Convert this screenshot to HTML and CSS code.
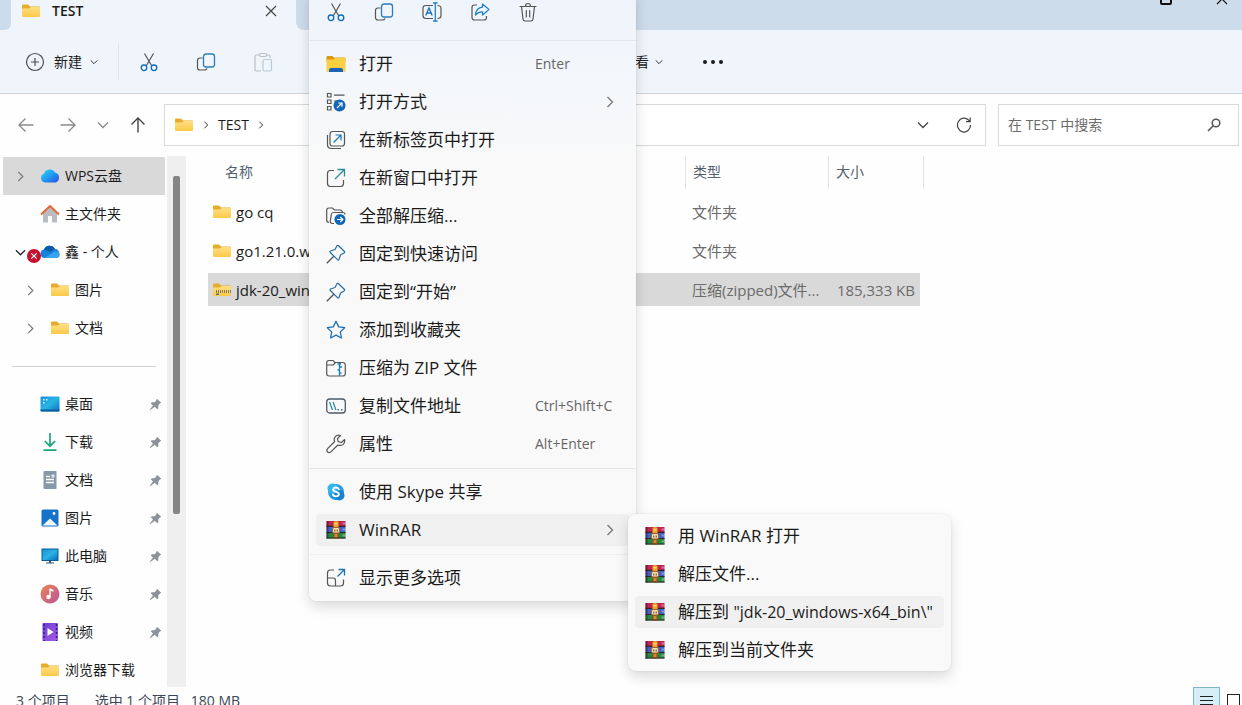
FILE: index.html
```html
<!DOCTYPE html>
<html lang="zh-CN">
<head>
    <meta charset="UTF-8">
    <meta name="viewport" content="width=device-width, initial-scale=1.0">
    <title>TEST</title>
    <link rel="stylesheet" href="styles.css">
</head>
<body>

    <!-- Shared icons -->
    <svg class="sprite" aria-hidden="true">
        <defs>
            <linearGradient id="g-folder" x1="0" y1="0" x2="0" y2="1"><stop offset="0" stop-color="#ffdf83"/><stop offset="1" stop-color="#fbc94a"/></linearGradient>
            <linearGradient id="g-wps" x1="0" y1="0" x2="1" y2="1"><stop offset="0" stop-color="#2fd6e8"/><stop offset=".5" stop-color="#1f9cf5"/><stop offset="1" stop-color="#2a4de0"/></linearGradient>
            <linearGradient id="g-desk" x1="0" y1="0" x2="1" y2="1"><stop offset="0" stop-color="#1b8fd6"/><stop offset=".5" stop-color="#28b4e4"/><stop offset="1" stop-color="#0d6ebd"/></linearGradient>
            <linearGradient id="g-music" x1="0" y1="0" x2="1" y2="1"><stop offset="0" stop-color="#ee8352"/><stop offset="1" stop-color="#b8569b"/></linearGradient>
            <linearGradient id="g-video" x1="0" y1="0" x2="1" y2="1"><stop offset="0" stop-color="#6a3fd0"/><stop offset="1" stop-color="#a95bea"/></linearGradient>
            <linearGradient id="g-skype" x1="0" y1="0" x2="1" y2="1"><stop offset="0" stop-color="#35b6ee"/><stop offset="1" stop-color="#1683d4"/></linearGradient>
        </defs>
        <symbol id="folder" viewBox="0 0 20 20">
            <path d="M1 4.5q0-1 1-1h5l2 2h9q1 0 1 1V9H1z" fill="#e8ac2c"/>
            <path d="M1 7.5h7l2-1.5h8q1 0 1 1v8q0 1-1 1H2q-1 0-1-1z" fill="url(#g-folder)"/>
        </symbol>
        <symbol id="zip" viewBox="0 0 20 20">
            <path d="M1 4.5q0-1 1-1h5l2 2h9q1 0 1 1V9H1z" fill="#e8ac2c"/>
            <path d="M1 7.5h7l2-1.5h8q1 0 1 1v8q0 1-1 1H2q-1 0-1-1z" fill="url(#g-folder)"/>
            <path d="M4 11.500h15" fill="none" stroke="#8a7a55" stroke-width="3" stroke-dasharray="1 1"/>
            <path d="M4 13.500h3v1.500H4z" fill="#4b6b8c"/>
        </symbol>
        <symbol id="cut" viewBox="0 0 20 20">
            <path d="M5.500 1.500l7.200 12.200M14.500 1.500L7.300 13.700" fill="none" stroke="#555" stroke-width="1.200"/>
            <circle cx="5" cy="15.800" r="2.800" fill="none" stroke="#0f6cbd" stroke-width="1.300"/>
            <circle cx="15" cy="15.800" r="2.800" fill="none" stroke="#0f6cbd" stroke-width="1.300"/>
        </symbol>
        <symbol id="copy" viewBox="0 0 20 20">
            <path d="M6.500 6H4q-2.500 0-2.500 2.500v7Q1.500 18 4 18h4.500q2 0 2.500-1.500" fill="none" stroke="#555" stroke-width="1.200"/>
            <rect x="7.500" y="2" width="11" height="13" rx="2.500" fill="none" stroke="#2b7cb8" stroke-width="1.300"/>
        </symbol>
        <symbol id="paste" viewBox="0 0 20 20">
            <path d="M6.500 3H3.500Q2 3 2 4.500v13Q2 19 3.500 19H8M13.500 3h2Q17 3 17 4.500V6" fill="none" stroke="#b9bec4" stroke-width="1.200"/>
            <rect x="6.500" y="1.500" width="7" height="3" rx="1.500" fill="none" stroke="#b9bec4" stroke-width="1.200"/>
            <rect x="10" y="7.500" width="8.500" height="11.500" rx="1.500" fill="none" stroke="#b9c9d6" stroke-width="1.200"/>
        </symbol>
        <symbol id="rename" viewBox="0 0 20 20">
            <path d="M11 3.500H4Q1 3.500 1 6.500v7q0 3 3 3h7M15.500 3.500q3.500 0 3.500 3v7q0 3-3.500 3" fill="none" stroke="#555" stroke-width="1.200"/>
            <path d="M13.300 1.500v17M11 1h4.600M11 19h4.600" fill="none" stroke="#1f83c9" stroke-width="1.300"/>
            <path d="M3.800 13.500L7 6l3.200 7.500M5 11h4" fill="none" stroke="#1b6fb5" stroke-width="1.300"/>
        </symbol>
        <symbol id="share" viewBox="0 0 20 20">
            <path d="M7 3H4.500Q2 3 2 5.500v10Q2 18 4.500 18H14q2.500 0 2.500-2.500V14" fill="none" stroke="#555" stroke-width="1.200"/>
            <path d="M12.500 2l6.500 5.500-6.500 5.500V9.800Q8.500 9.500 5.500 13 6 6 12.500 5.200z" fill="none" stroke="#1f7fc0" stroke-width="1.200" stroke-linejoin="round"/>
        </symbol>
        <symbol id="trash" viewBox="0 0 20 20">
            <path d="M2 4.500h16M7.500 4.500q0-3 2.500-3t2.500 3M3.500 4.500L5 17q.2 2 2 2h6q1.800 0 2-2l1.500-12.500M8.300 8.500v6.500M11.700 8.500v6.500" fill="none" stroke="#555" stroke-width="1.200" stroke-linecap="round"/>
        </symbol>
        <symbol id="plus" viewBox="0 0 20 20">
            <circle cx="10" cy="10" r="8.500" fill="none" stroke="#4a4f55" stroke-width="1.200"/>
            <path d="M10 6v8M6 10h8" stroke="#4a4f55" stroke-width="1.200"/>
        </symbol>
        <symbol id="down" viewBox="0 0 12 12"><path d="M1 3.500L6 8.500l5-5" fill="none" stroke="currentColor" stroke-width="1.300"/></symbol>
        <symbol id="right" viewBox="0 0 12 12"><path d="M3.500 1L8.500 6l-5 5" fill="none" stroke="currentColor" stroke-width="1.300"/></symbol>
        <symbol id="close" viewBox="0 0 12 12"><path d="M1 1l10 10M11 1L1 11" fill="none" stroke="currentColor" stroke-width="1.200"/></symbol>
        <symbol id="back" viewBox="0 0 16 16"><path d="M15.500 8H1M7.500 1.500L1 8l6.500 6.500" fill="none" stroke="currentColor" stroke-width="1.300"/></symbol>
        <symbol id="forward" viewBox="0 0 16 16"><path d="M.5 8H15M8.500 1.500L15 8l-6.500 6.500" fill="none" stroke="currentColor" stroke-width="1.300"/></symbol>
        <symbol id="up" viewBox="0 0 16 16"><path d="M8 15.500V1M1.500 7.500L8 1l6.500 6.500" fill="none" stroke="currentColor" stroke-width="1.400"/></symbol>
        <symbol id="refresh" viewBox="0 0 16 16"><path d="M14.500 8A6.500 7 0 1 1 12.500 3l1.500 1.500M14.200 .5v4.200H10" fill="none" stroke="currentColor" stroke-width="1.200"/></symbol>
        <symbol id="search" viewBox="0 0 14 14"><circle cx="9" cy="5" r="3.800" fill="none" stroke="currentColor" stroke-width="1.500"/><path d="M6.300 7.800L1 13" stroke="currentColor" stroke-width="1.600"/></symbol>
        <symbol id="pushpin" viewBox="0 0 14 14">
            <path d="M8.500 .8l4.700 4.400-1.500.8-1.700 2 .1 3-1.300 1-2.600-2.700L1.500 13l-.8-.4 3.600-4.400L1.800 5.600l1.400-1.100 2.800.2L7.800 2.800z" fill="#8d9299"/>
        </symbol>
        <symbol id="wps" viewBox="0 0 20 20"><path d="M5 16.500a4.500 4.500 0 0 1-1-8.700A6 6 0 0 1 15 6.500a5.200 5.200 0 0 1 .5 10z" fill="url(#g-wps)"/></symbol>
        <symbol id="home" viewBox="0 0 20 20">
            <path d="M3 9l7-6.500L17 9v9.500h-5V12H8v6.500H3z" fill="#b9bcc0"/>
            <path d="M1 10.500L10 2l9 8.500" fill="none" stroke="#e2683a" stroke-width="2" stroke-linejoin="round"/>
        </symbol>
        <symbol id="onedrive" viewBox="0 0 20 20">
            <path d="M4.500 16A4.300 4.300 0 0 1 4 7.500 6 6 0 0 1 15 7a4.600 4.600 0 0 1 1 9z" fill="#1683d8"/>
            <path d="M4 7.500A6 6 0 0 1 15 7l-4.500 3z" fill="#0b5aa8"/>
            <path d="M4.500 16l10-6.500Q19.500 9 19.800 12.500 19.500 16 16 16z" fill="#36a3ee"/>
        </symbol>
        <symbol id="error" viewBox="0 0 14 14"><circle cx="7" cy="7" r="7" fill="#c8102e"/><path d="M4.300 4.300l5.400 5.400M9.700 4.300L4.300 9.700" stroke="#fff" stroke-width="1.200"/></symbol>
        <symbol id="desktop" viewBox="0 0 20 20"><rect x=".5" y="2.500" width="19" height="15" rx="1" fill="url(#g-desk)"/><path d="M3 5h1.500v1.500H3zM3 8h1.500v1.500H3zM6 5h1.500v1.500H6z" fill="#d6f3ff"/><path d="M.5 15.500h19v1.200q0 .8-1 .8h-17q-1 0-1-.8z" fill="#0b5f9f"/></symbol>
        <symbol id="download" viewBox="0 0 20 20"><path d="M10 1v13M4.800 9L10 14.200 15.200 9M3.500 18.200h13" fill="none" stroke="#1ba57c" stroke-width="1.700"/></symbol>
        <symbol id="doc" viewBox="0 0 20 20"><rect x="3.500" y="1" width="13" height="18" rx="1" fill="#8798aa"/><path d="M6 6.500h4M6 9.500h8M6 12.500h8" stroke="#fff" stroke-width="1.300"/><path d="M11.500 4.500h3v3h-3z" fill="#dfe7ef"/></symbol>
        <symbol id="picture" viewBox="0 0 20 20"><rect x="1.500" y="1.500" width="17" height="17" rx="1.500" fill="#1473c8"/><path d="M2.500 17.500l7.500-7 7.500 7z" fill="#f2f8ff"/><circle cx="14" cy="5.500" r="1.400" fill="#fff"/></symbol>
        <symbol id="pc" viewBox="0 0 20 20"><rect x="1.500" y="2.500" width="17" height="12.500" fill="#0a5f8f"/><rect x="2.500" y="3.500" width="15" height="10.500" fill="url(#g-desk)"/><path d="M9 15h2v1.500h3v1H6v-1h3z" fill="#31566e"/></symbol>
        <symbol id="music" viewBox="0 0 20 20"><circle cx="10" cy="10" r="9.500" fill="url(#g-music)"/><circle cx="8.500" cy="13" r="2.200" fill="#fff"/><path d="M9.300 4.500h1.200l3 1.500v1.700l-2.800-1V13H9.300z" fill="#fff"/></symbol>
        <symbol id="video" viewBox="0 0 20 20"><rect x="2.500" y="1" width="15.500" height="18" rx="1" fill="url(#g-video)"/><path d="M4 2v17M16.500 2v17" stroke="#33207a" stroke-width="1.500" stroke-dasharray="2 2"/><path d="M7.500 6l6 4-6 4z" fill="#fff"/></symbol>
        <symbol id="open" viewBox="0 0 20 20">
            <path d="M.5 3q0-1 1-1h5l1.500 1.500h10.500q1 0 1 1V8H.5z" fill="#d99b16"/>
            <path d="M.5 5.500h7L9 4h9.500q1 0 1 1v12q0 1-1 1h-17q-1 0-1-1z" fill="#fbd043"/>
            <path d="M3 18v-2q0-2 2-2h10q2 0 2 2v2z" fill="#1b62b7"/>
        </symbol>
        <symbol id="open-with" viewBox="0 0 20 20">
            <path d="M1.500 1.500h3.500v3.500H1.500zM1.500 8h3.500v3.500H1.500zM1.500 14.500h3.500V18H1.500zM8 3.200h10.500M8 9h3" fill="none" stroke="#555" stroke-width="1.200"/>
            <circle cx="13.500" cy="13.500" r="6" fill="#1166b8"/><path d="M11 16l4.800-4.800M12.300 11h3.700v3.700" fill="none" stroke="#fff" stroke-width="1.200"/>
        </symbol>
        <symbol id="new-tab" viewBox="0 0 20 20">
            <rect x="4" y="1.500" width="14.500" height="14.500" rx="2.500" fill="none" stroke="#555" stroke-width="1.200"/>
            <path d="M1.500 5v9.500q0 4 4 4H15" fill="none" stroke="#555" stroke-width="1.200"/>
            <path d="M7.500 12.500L14.500 5.500M9.500 5h5.500v5.500" fill="none" stroke="#1a73b8" stroke-width="1.200"/>
        </symbol>
        <symbol id="new-window" viewBox="0 0 20 20">
            <path d="M8 2.500H4.500q-3 0-3 3v10q0 3 3 3h10q3 0 3-3V12" fill="none" stroke="#555" stroke-width="1.200"/>
            <path d="M9 11L18 2M11.500 1.500h7V8.500" fill="none" stroke="#2c8b9b" stroke-width="1.300"/>
        </symbol>
        <symbol id="extract" viewBox="0 0 20 20">
            <path d="M3 16.500q-2.300-.2-2.300-2.500V4.500Q.700 2 3 2h3.500l2 2H14q2 0 2.500 2.500M8 17.500H6.500q-2.500 0-2.200-2.500l1-6.500q.3-2 2.200-2H17q2 0 2 2" fill="none" stroke="#555" stroke-width="1.200"/>
            <circle cx="14" cy="13.500" r="5.500" fill="#1166b8"/><path d="M11 13.500h5.500M14.300 11l2.500 2.500-2.500 2.500" fill="none" stroke="#fff" stroke-width="1.200"/>
        </symbol>
        <symbol id="pin" viewBox="0 0 20 20">
            <path d="M12.300 1.500L18.500 7.500q.5 1-.5 1.500l-3.500 2-1.500 4.500q-.5 1-1.500.2L4.300 8.500q-.8-1 .2-1.500L9 5.500l2-3.700q.5-.8 1.300-.3z" fill="none" stroke="#226ca5" stroke-width="1.200" stroke-linejoin="round"/>
            <path d="M7.800 12.200L.8 19.200" stroke="#555" stroke-width="1.300"/>
        </symbol>
        <symbol id="star" viewBox="0 0 20 20"><path d="M10 1.300l2.700 5.600 6 .8-4.400 4.200 1.100 6.100L10 15.100 4.600 18l1.100-6.100L1.300 7.700l6-.8z" fill="none" stroke="#1d6fb5" stroke-width="1.300" stroke-linejoin="round"/></symbol>
        <symbol id="compress" viewBox="0 0 20 20">
            <path d="M.7 7h6.500l2.300-2.500M3 2.500h4l2 2h7.500q2.800 0 2.800 2.500v8.500q0 2.500-2.800 2.500H3.200q-2.500 0-2.500-2.500V5q0-2.500 2.300-2.500z" fill="none" stroke="#555" stroke-width="1.200"/>
            <path d="M11.500 6h3.500M13.500 5v13M13.500 9h2.500M11.500 12h2M13.500 15h2" fill="none" stroke="#1680c4" stroke-width="1.300"/>
        </symbol>
        <symbol id="path" viewBox="0 0 20 20">
            <rect x=".7" y="3" width="18.600" height="14" rx="3" fill="none" stroke="#4d5a66" stroke-width="1.300"/>
            <path d="M3.500 6l3 8M7 6l3 8" stroke="#2585a8" stroke-width="1.200"/><path d="M11.500 13h1.500v1.500h-1.500zM15 13h1.500v1.500H15z" fill="#3b6f96"/>
        </symbol>
        <symbol id="wrench" viewBox="0 0 20 20"><path d="M18.600 5.500l-3.200 3-3.200-.8-.8-3 3.200-3.200Q10.500.3 8.700 3.500q-1 2 0 4L1.600 14.700q-1.500 1.700 0 3.300 1.700 1.400 3.300-.2l7-6.800q3 1.200 5.300-.6 2-2 1.400-4.900z" fill="none" stroke="#555" stroke-width="1.200" stroke-linejoin="round"/></symbol>
        <symbol id="skype" viewBox="0 0 20 20">
            <circle cx="10" cy="10" r="8" fill="url(#g-skype)"/><circle cx="6.500" cy="6.500" r="5" fill="#35b6ee"/><circle cx="13.500" cy="13.500" r="5" fill="#1683d4"/>
            <path d="M13 7.500q-.7-2-3-2T7.200 7.600q0 1.700 2.800 2.300t2.900 2.300q-.2 2.200-2.900 2.200t-3.200-2.100" fill="none" stroke="#fff" stroke-width="1.800" stroke-linecap="round"/>
        </symbol>
        <symbol id="winrar" viewBox="0 0 20 20">
            <path d="M.5 1h19v6H.5z" fill="#c02552"/><path d="M.5 7h19v6H.5z" fill="#3d62c8"/><path d="M.5 13h19v5.500H.5z" fill="#238a3f"/>
            <path d="M.5 5.800h19V7H.5zM.5 12h19v1H.5zM.5 17.500h19v1H.5z" fill="#33242e"/>
            <path d="M.5 1h2v17.500h-2z" fill="#3a1220" fill-opacity=".55"/>
            <path d="M16.500 2.500h3v2h-3zM16.500 8.500h3v2h-3zM16.500 14.500h3v2h-3z" fill="#d9c8c8" fill-opacity=".5"/>
            <path d="M7.500 1h5v17.500h-5z" fill="#8c4a1c"/>
            <path d="M7.500 2q2.500-2 5 0v5h-5z" fill="#f2a230"/><path d="M8.500 3h3v1.500h-3z" fill="#ffd56b"/>
            <rect x="6.500" y="7.500" width="7" height="5.500" rx="1.500" fill="#f7e3b8" stroke="#a35f22"/>
            <path d="M8.300 9.500h1v2h-1zM10.700 9.500h1v2h-1z" fill="#5b3418"/>
            <path d="M8.500 14h3v3h-3z" fill="#d98a2e"/>
        </symbol>
        <symbol id="more-options" viewBox="0 0 20 20">
            <path d="M8 2H4.500Q1.500 2 1.500 5v10q0 3 3 3h10q3 0 3-3v-3.500M1.500 10H7q2.500 0 2.500 2.500V18" fill="none" stroke="#555" stroke-width="1.200"/>
            <path d="M11.500 8.500l6.500-6.500M12.500 1.500h6V7.500" fill="none" stroke="#1a73b8" stroke-width="1.300"/>
        </symbol>
    </svg>

    <div class="window">

        <!-- Title bar with the open tab -->
        <header class="titlebar">
            <div class="titlebar-edge"></div>
            <div class="tab">
                <svg class="icon"><use href="#folder"/></svg>
                <span class="tab-title">TEST</span>
                <button class="plain-button" aria-label="关闭标签页"><svg class="icon-small"><use href="#close"/></svg></button>
            </div>
            <div class="titlebar-rest">
                <button class="plain-button" aria-label="最大化"><span class="maximize"></span></button>
                <button class="plain-button" aria-label="关闭"><svg class="icon-small"><use href="#close"/></svg></button>
            </div>
        </header>

        <!-- Command bar -->
        <div class="toolbar">
            <button class="tool-new"><svg class="icon"><use href="#plus"/></svg>新建<svg class="icon-tiny"><use href="#down"/></svg></button>
            <span class="divider"></span>
            <button class="tool" aria-label="剪切"><svg class="icon"><use href="#cut"/></svg></button>
            <button class="tool" aria-label="复制"><svg class="icon"><use href="#copy"/></svg></button>
            <button class="tool" aria-label="粘贴" disabled><svg class="icon"><use href="#paste"/></svg></button>
            <button class="tool" aria-label="重命名"><svg class="icon"><use href="#rename"/></svg></button>
            <button class="tool" aria-label="共享"><svg class="icon"><use href="#share"/></svg></button>
            <button class="tool" aria-label="删除"><svg class="icon"><use href="#trash"/></svg></button>
            <button class="tool-view">查看<svg class="icon-tiny"><use href="#down"/></svg></button>
            <button class="tool-more" aria-label="更多"><i></i><i></i><i></i></button>
        </div>

        <!-- Navigation and search -->
        <div class="address-row">
            <nav class="history">
                <button class="plain-button muted" aria-label="后退"><svg class="icon-nav"><use href="#back"/></svg></button>
                <button class="plain-button muted" aria-label="前进"><svg class="icon-nav"><use href="#forward"/></svg></button>
                <button class="plain-button muted" aria-label="最近位置"><svg class="icon-small"><use href="#down"/></svg></button>
                <button class="plain-button" aria-label="向上"><svg class="icon-nav"><use href="#up"/></svg></button>
            </nav>
            <div class="address">
                <svg class="icon"><use href="#folder"/></svg>
                <svg class="icon-tiny"><use href="#right"/></svg>
                <a href="#">TEST</a>
                <svg class="icon-tiny"><use href="#right"/></svg>
                <div class="address-tools">
                    <button class="plain-button" aria-label="以前的位置"><svg class="icon-small"><use href="#down"/></svg></button>
                    <button class="plain-button" aria-label="刷新"><svg class="icon-nav"><use href="#refresh"/></svg></button>
                </div>
            </div>
            <div class="search">
                <input type="text" placeholder="在 TEST 中搜索" aria-label="搜索">
                <svg class="icon-search"><use href="#search"/></svg>
            </div>
        </div>

        <div class="content">
            <!-- Sidebar tree -->
            <aside class="sidebar">
                <nav class="tree">
                    <a href="#" class="tree-item selected"><svg class="chevron"><use href="#right"/></svg><svg class="icon"><use href="#wps"/></svg><span>WPS云盘</span></a>
                    <a href="#" class="tree-item"><span class="chevron"></span><svg class="icon"><use href="#home"/></svg><span>主文件夹</span></a>
                    <a href="#" class="tree-item expanded"><svg class="chevron"><use href="#down"/></svg><span class="badge-box"><svg class="icon"><use href="#onedrive"/></svg><svg class="badge"><use href="#error"/></svg></span><span>鑫 - 个人</span></a>
                    <a href="#" class="tree-item nested"><svg class="chevron"><use href="#right"/></svg><svg class="icon"><use href="#folder"/></svg><span>图片</span></a>
                    <a href="#" class="tree-item nested"><svg class="chevron"><use href="#right"/></svg><svg class="icon"><use href="#folder"/></svg><span>文档</span></a>
                    <hr class="tree-line">
                    <a href="#" class="tree-item"><span class="chevron"></span><svg class="icon"><use href="#desktop"/></svg><span>桌面</span><svg class="pushpin"><use href="#pushpin"/></svg></a>
                    <a href="#" class="tree-item"><span class="chevron"></span><svg class="icon"><use href="#download"/></svg><span>下载</span><svg class="pushpin"><use href="#pushpin"/></svg></a>
                    <a href="#" class="tree-item"><span class="chevron"></span><svg class="icon"><use href="#doc"/></svg><span>文档</span><svg class="pushpin"><use href="#pushpin"/></svg></a>
                    <a href="#" class="tree-item"><span class="chevron"></span><svg class="icon"><use href="#picture"/></svg><span>图片</span><svg class="pushpin"><use href="#pushpin"/></svg></a>
                    <a href="#" class="tree-item"><span class="chevron"></span><svg class="icon"><use href="#pc"/></svg><span>此电脑</span><svg class="pushpin"><use href="#pushpin"/></svg></a>
                    <a href="#" class="tree-item"><span class="chevron"></span><svg class="icon"><use href="#music"/></svg><span>音乐</span><svg class="pushpin"><use href="#pushpin"/></svg></a>
                    <a href="#" class="tree-item"><span class="chevron"></span><svg class="icon"><use href="#video"/></svg><span>视频</span><svg class="pushpin"><use href="#pushpin"/></svg></a>
                    <a href="#" class="tree-item"><span class="chevron"></span><svg class="icon"><use href="#folder"/></svg><span>浏览器下载</span></a>
                </nav>
                <div class="scrollbar"><div class="scroll-thumb"></div></div>
            </aside>

            <!-- File list -->
            <main class="files">
                <table class="file-table">
                    <thead>
                        <tr><th class="col-name">名称</th><th class="col-type">类型</th><th class="col-size">大小</th></tr>
                    </thead>
                    <tbody>
                        <tr><td><span class="file-name"><svg class="icon"><use href="#folder"/></svg>go cq</span></td><td>文件夹</td><td></td></tr>
                        <tr><td><span class="file-name"><svg class="icon"><use href="#folder"/></svg>go1.21.0.windows-amd64</span></td><td>文件夹</td><td></td></tr>
                        <tr class="selected"><td><span class="file-name"><svg class="icon"><use href="#zip"/></svg>jdk-20_windows-x64_bin</span></td><td>压缩(zipped)文件...</td><td>185,333 KB</td></tr>
                    </tbody>
                </table>
            </main>
        </div>

        <!-- Status bar -->
        <footer class="statusbar">
            <span>3 个项目</span>
            <span>选中 1 个项目&nbsp;&nbsp; 180 MB</span>
            <div class="view-buttons">
                <button class="view-details" aria-label="详细信息"><i></i><i></i><i></i></button>
                <button class="view-tiles" aria-label="大图标"></button>
            </div>
        </footer>
    </div>

    <!-- Context menu -->
    <div class="menu context-menu" role="menu">
        <div class="menu-actions">
            <button aria-label="剪切"><svg class="icon"><use href="#cut"/></svg></button>
            <button aria-label="复制"><svg class="icon"><use href="#copy"/></svg></button>
            <button aria-label="重命名"><svg class="icon"><use href="#rename"/></svg></button>
            <button aria-label="共享"><svg class="icon"><use href="#share"/></svg></button>
            <button aria-label="删除"><svg class="icon"><use href="#trash"/></svg></button>
        </div>
        <hr>
        <button class="menu-item" role="menuitem"><svg class="icon"><use href="#open"/></svg><span>打开</span><kbd>Enter</kbd></button>
        <button class="menu-item" role="menuitem"><svg class="icon"><use href="#open-with"/></svg><span>打开方式</span><svg class="submenu-arrow"><use href="#right"/></svg></button>
        <button class="menu-item" role="menuitem"><svg class="icon"><use href="#new-tab"/></svg><span>在新标签页中打开</span></button>
        <button class="menu-item" role="menuitem"><svg class="icon"><use href="#new-window"/></svg><span>在新窗口中打开</span></button>
        <button class="menu-item" role="menuitem"><svg class="icon"><use href="#extract"/></svg><span>全部解压缩...</span></button>
        <button class="menu-item" role="menuitem"><svg class="icon"><use href="#pin"/></svg><span>固定到快速访问</span></button>
        <button class="menu-item" role="menuitem"><svg class="icon"><use href="#pin"/></svg><span>固定到“开始”</span></button>
        <button class="menu-item" role="menuitem"><svg class="icon"><use href="#star"/></svg><span>添加到收藏夹</span></button>
        <button class="menu-item" role="menuitem"><svg class="icon"><use href="#compress"/></svg><span>压缩为 ZIP 文件</span></button>
        <button class="menu-item" role="menuitem"><svg class="icon"><use href="#path"/></svg><span>复制文件地址</span><kbd>Ctrl+Shift+C</kbd></button>
        <button class="menu-item" role="menuitem"><svg class="icon"><use href="#wrench"/></svg><span>属性</span><kbd>Alt+Enter</kbd></button>
        <hr>
        <button class="menu-item" role="menuitem"><svg class="icon"><use href="#skype"/></svg><span>使用 Skype 共享</span></button>
        <button class="menu-item active" role="menuitem"><svg class="icon"><use href="#winrar"/></svg><span>WinRAR</span><svg class="submenu-arrow"><use href="#right"/></svg></button>
        <hr class="faint">
        <button class="menu-item" role="menuitem"><svg class="icon"><use href="#more-options"/></svg><span>显示更多选项</span></button>
    </div>

    <!-- WinRAR submenu -->
    <div class="menu submenu" role="menu">
        <button class="menu-item" role="menuitem"><svg class="icon"><use href="#winrar"/></svg><span>用 WinRAR 打开</span></button>
        <button class="menu-item" role="menuitem"><svg class="icon"><use href="#winrar"/></svg><span>解压文件...</span></button>
        <button class="menu-item active" role="menuitem"><svg class="icon"><use href="#winrar"/></svg><span>解压到 <b class="target">"jdk-20_windows-x64_bin\"</b></span></button>
        <button class="menu-item" role="menuitem"><svg class="icon"><use href="#winrar"/></svg><span>解压到当前文件夹</span></button>
    </div>

</body>
</html>
```

FILE: styles.css
```css
/* General reset */
* {
    margin: 0;
    padding: 0;
    box-sizing: border-box;
}

:root {
    --title: #cddceb;
    --ribbon: #f0f5fb;
    --selected: #d9d9d9;
    --line: #d9d9d9;
    --text: #1b1b1b;
    --muted: #6b6b6b;
}

body {
    position: relative;
    height: 100vh;
    overflow: hidden;
    font-family: "Open Sans", "Noto Sans CJK SC", sans-serif;
    font-size: 14px;
    line-height: 20px;
    color: var(--text);
    background: #fefefe;
}

button,
input {
    font: inherit;
    color: inherit;
    border: none;
    background: none;
}

a {
    color: inherit;
    text-decoration: none;
}

svg {
    display: block;
    flex: none;
}

.sprite {
    position: absolute;
    width: 0;
    height: 0;
}

.icon { width: 20px; height: 20px; }
.icon-nav { width: 16px; height: 16px; }
.icon-search { width: 14px; height: 14px; }
.icon-small { width: 12px; height: 12px; }
.icon-tiny { width: 8px; height: 8px; }

.plain-button {
    display: flex;
    align-items: center;
    justify-content: center;
    color: #444;
}

.muted { color: #8a8a8a; }

/* The window runs a little past the top and bottom of the viewport */
.window {
    display: flex;
    flex-direction: column;
    height: calc(100vh + 25px);
    margin-top: -16px;
}

/* Title bar */
.titlebar {
    display: flex;
    height: 46px;
    background: var(--ribbon);
}

.titlebar-edge {
    width: 11px;
    background: var(--title);
    border-radius: 0 0 6px 0;
}

.tab {
    display: flex;
    align-items: center;
    width: 285px;
    padding: 8px 19px 0 10px;
}

.tab-title {
    flex: 1;
    margin-left: 11px;
    font-weight: 600;
}

.titlebar-rest {
    display: flex;
    flex: 1;
    justify-content: flex-end;
    align-items: flex-start;
    gap: 44px;
    padding: 9px 14px 0 0;
    background: var(--title);
    border-radius: 0 0 0 8px;
}

.titlebar-rest .plain-button { color: #111; }

.maximize {
    width: 12px;
    height: 12px;
    border: 2px solid #111;
    border-radius: 2px;
}

/* Command bar */
.toolbar {
    display: flex;
    align-items: center;
    height: 64px;
    padding-left: 25px;
    background: var(--ribbon);
    border-bottom: 1px solid #cfd3d8;
}

.tool-new {
    display: flex;
    align-items: center;
}

.tool-new .icon { margin-right: 9px; }
.tool-new .icon-tiny { margin-left: 8px; }

.divider {
    width: 1px;
    height: 36px;
    margin: 0 1px 0 20px;
    background: #dfe3e8;
}

.tool {
    display: flex;
    justify-content: center;
    width: 57px;
}

.tool-view {
    display: flex;
    align-items: center;
    justify-content: flex-end;
    gap: 6px;
    width: 201px;
}

.tool-more {
    display: flex;
    gap: 4px;
    padding: 8px;
    margin-left: 32px;
}

.tool-more i {
    width: 4px;
    height: 4px;
    border-radius: 50%;
    background: #1b1b1b;
}

/* Address row */
.address-row {
    display: flex;
    align-items: center;
    gap: 12px;
    height: 62px;
    padding-right: 3px;
}

.history {
    display: flex;
    align-items: center;
    gap: 21px;
    width: 152px;
    padding-left: 18px;
}

.history button:first-child { margin-right: 5px; }

.address {
    display: flex;
    flex: 1;
    align-items: center;
    gap: 10px;
    height: 42px;
    padding: 0 13px 0 9px;
    border: 1px solid var(--line);
    background: #fff;
}

.address > .icon-tiny { margin: 0 -2px; }

.address-tools {
    display: flex;
    gap: 27px;
    margin-left: auto;
}

.search {
    display: flex;
    align-items: center;
    width: 241px;
    height: 42px;
    padding: 0 17px 0 9px;
    border: 1px solid var(--line);
    background: #fff;
    color: #555;
}

.search input {
    flex: 1;
    min-width: 0;
    outline: none;
}

.search input::placeholder {
    color: var(--muted);
    opacity: 1;
}

/* Main area */
.content {
    display: flex;
    flex: 1;
    min-height: 0;
}

.sidebar {
    display: flex;
    width: 186px;
    overflow: hidden;
}

.tree {
    flex: 1;
    padding: 1px 0 0 3px;
}

.tree-item {
    display: flex;
    align-items: center;
    height: 38px;
    padding: 0 3px 0 12px;
    margin-right: 2px;
}

.tree-item.selected { background: var(--selected); }
.tree-item.nested { padding-left: 22px; }

.tree-item .chevron {
    width: 11px;
    height: 11px;
    margin-right: 14px;
    color: #777;
}

.tree-item.expanded .chevron { color: #222; }
.tree-item .icon { margin-right: 5px; }

.badge-box { position: relative; }

.badge {
    position: absolute;
    left: -13px;
    top: 7px;
    width: 14px;
    height: 14px;
}

.pushpin {
    width: 13px;
    height: 13px;
    margin-left: auto;
}

.tree-line {
    height: 1px;
    margin: 19px 11px 18px 9px;
    border: none;
    background: #cfcfcf;
}

.scrollbar {
    width: 19px;
    padding: 20px 6px 0;
    background: #efefef;
}

.scroll-thumb {
    height: 338px;
    border-radius: 2px;
    background: #858585;
}

/* File list */
.files {
    flex: 1;
    padding-left: 22px;
}

.file-table {
    width: 712px;
    margin-top: -6px;
    table-layout: fixed;
    border-collapse: separate;
    border-spacing: 0 6px;
}

.file-table th {
    position: relative;
    height: 33px;
    padding: 0 0 2px 7px;
    border-left: 1px solid #e5e5e5;
    text-align: left;
    font-weight: 400;
    color: #53626f;
}

.file-table .col-name {
    width: 477px;
    padding-left: 17px;
    border-left: none;
}

.file-table .col-type { width: 143px; }

.file-table .col-size::after {
    content: "";
    position: absolute;
    right: -4px;
    top: 0;
    bottom: 0;
    width: 1px;
    background: #e5e5e5;
}

.file-table td {
    height: 33px;
    padding-left: 7px;
    font-size: 15px;
    color: var(--muted);
    white-space: nowrap;
}

.file-table td:first-child {
    padding-left: 4px;
    color: var(--text);
}

.file-table td:last-child {
    padding-right: 5px;
    text-align: right;
}

.file-table .selected td { background: var(--selected); }

.file-name {
    display: flex;
    align-items: center;
    gap: 4px;
}

/* Status bar */
.statusbar {
    display: flex;
    align-items: center;
    gap: 25px;
    height: 27px;
    padding: 0 2px 0 16px;
    color: #3c4657;
}

.view-buttons {
    display: flex;
    align-items: center;
    gap: 7px;
    margin-left: auto;
}

.view-details {
    display: flex;
    flex-direction: column;
    align-items: center;
    gap: 3px;
    width: 27px;
    height: 27px;
    padding-top: 8px;
    border: 1px solid #7fb3c8;
    background: #d8eef7;
}

.view-details i {
    width: 13px;
    height: 1px;
    background: #222;
}

.view-tiles {
    width: 13px;
    height: 13px;
    border: 1px solid #222;
}

/* Menus */
.menu {
    position: absolute;
    display: flex;
    flex-direction: column;
    background: #f9f9f9;
    border-radius: 8px;
    box-shadow: 0 6px 14px rgba(0, 0, 0, 0.14), 0 0 2px rgba(0, 0, 0, 0.1);
    font-size: 17px;
    line-height: 24px;
}

.context-menu {
    left: 309px;
    top: -12px;
    width: 327px;
    padding-bottom: 4px;
    background: linear-gradient(#eef4fc, #f9f9f9 180px);
}

.submenu {
    left: 628px;
    top: 514px;
    width: 323px;
    padding: 3px 0 2px;
}

.menu hr {
    height: 1px;
    margin: 5px 0 4px;
    border: none;
    background: #e3e5e8;
}

.menu hr.faint { background: #f1f1f1; }

.menu-actions {
    display: flex;
    align-items: center;
    gap: 28px;
    height: 47px;
    padding-left: 17px;
}

.menu-item {
    display: flex;
    align-items: center;
    gap: 13px;
    height: 32px;
    margin: 3px 7px;
    padding-left: 10px;
    border-radius: 4px;
    text-align: left;
}

.menu-item.active { background: #f0f0f0; }

.menu-item span {
    flex: 1;
    white-space: nowrap;
}

.menu-item .target {
    font-size: 16px;
    font-weight: 400;
}

.menu-item kbd {
    width: 81px;
    margin-right: 13px;
    font: inherit;
    font-size: 14px;
    color: #666;
    white-space: nowrap;
}

.submenu-arrow {
    width: 12px;
    height: 12px;
    margin-right: 13px;
    color: #777;
}
```
